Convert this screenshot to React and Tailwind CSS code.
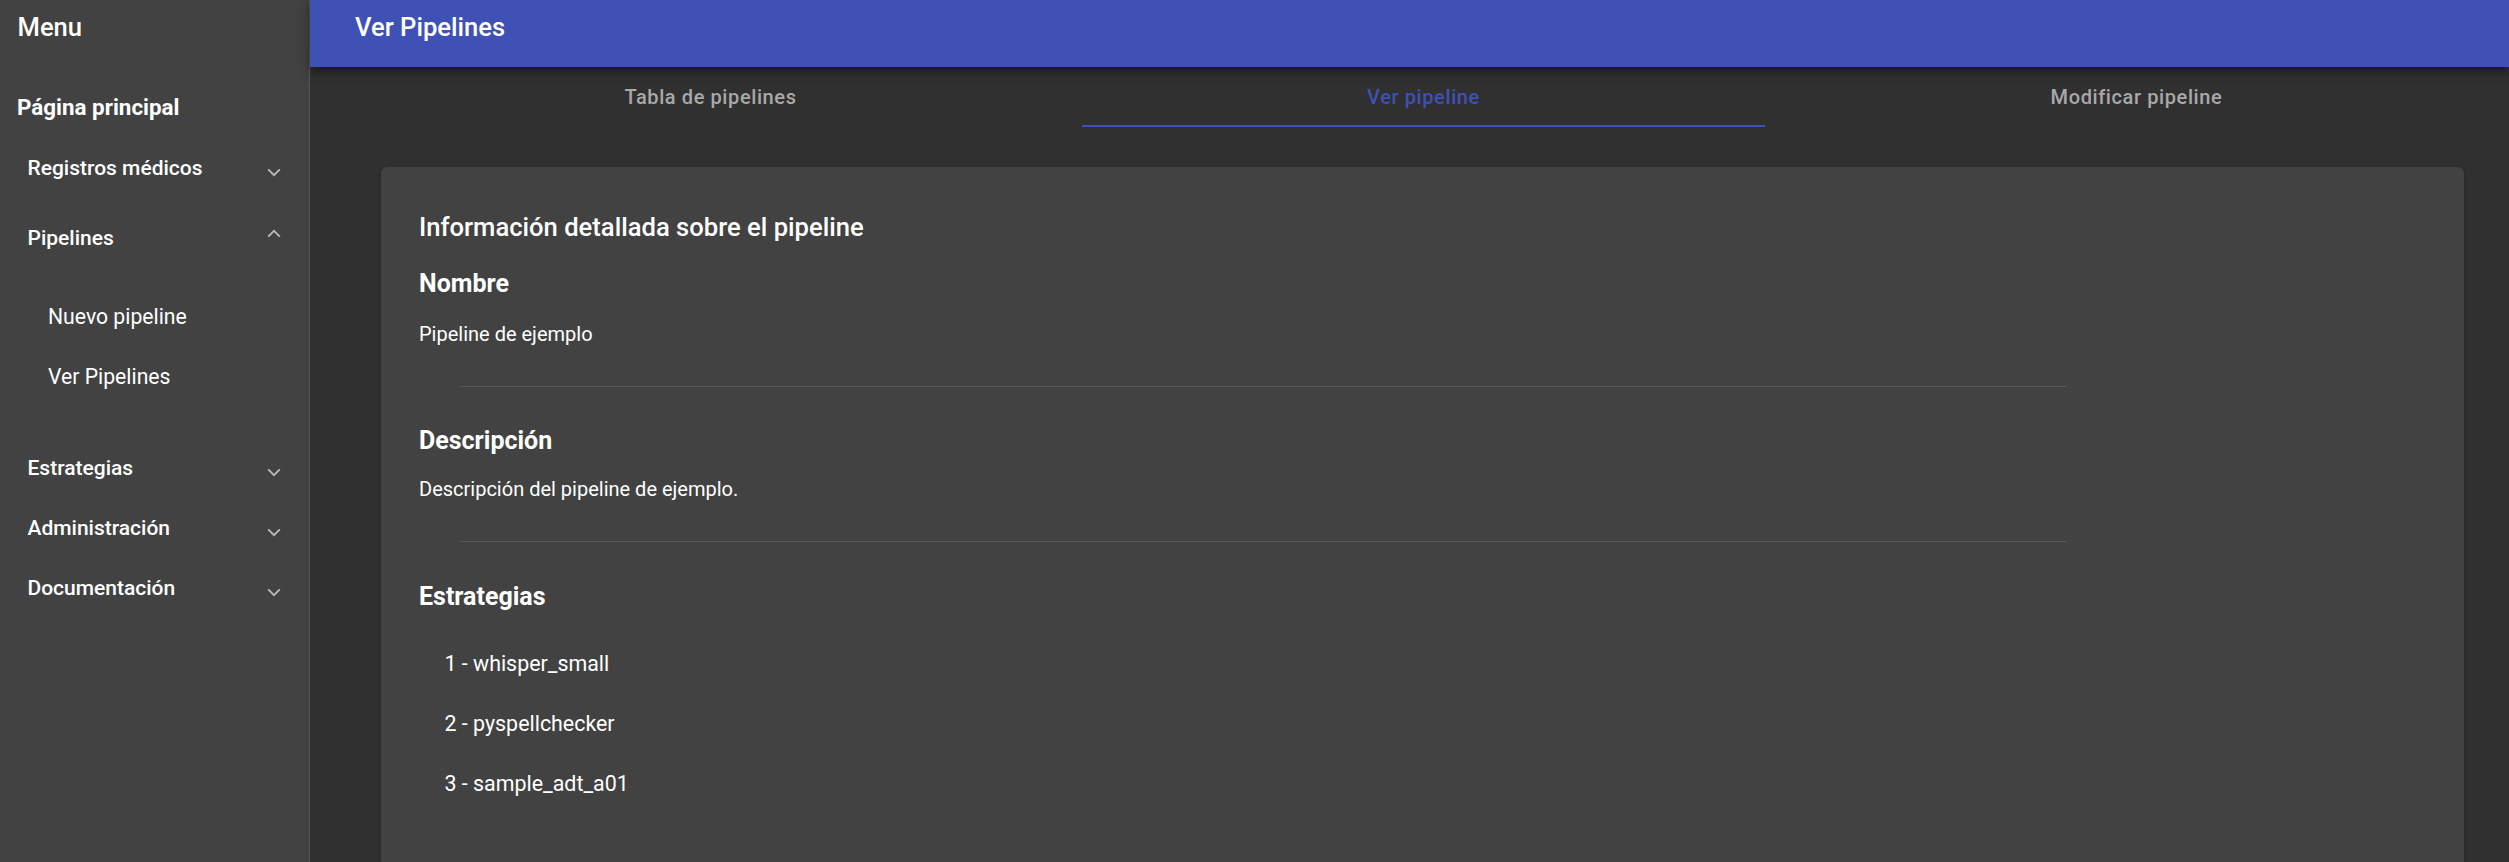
import React from 'react';

const Chevron = ({ up = false, className = '' }) => (
  <svg width="14" height="9" viewBox="0 0 14 9" fill="none" stroke="#b9b9b9" strokeWidth="1.9" className={className}>
    <polyline points={up ? '1.2,7.6 7,1.8 12.8,7.6' : '1.2,1.4 7,7.2 12.8,1.4'} />
  </svg>
);

const MenuGroup = ({ label, open = false, height = 'h-[60px]' }) => (
  <div className={`flex ${height} items-center justify-between pl-[27.5px] pr-[28px]`}>
    <span className="text-[21px] font-medium leading-[30px]">{label}</span>
    {open ? <Chevron up className="mb-[10px]" /> : <Chevron className="mt-[8px]" />}
  </div>
);

const tabs = ['Tabla de pipelines', 'Ver pipeline', 'Modificar pipeline'];
const strategies = ['whisper_small', 'pyspellchecker', 'sample_adt_a01'];

export default function App() {
  const active = 1;

  return (
    <div className="flex h-[862px] w-full overflow-hidden bg-[#303030] font-['Roboto',sans-serif] text-white">
      <aside className="w-[310px] shrink-0 border-r border-[#575757] bg-[#424242]">
        <div className="h-[54px] pl-[17.5px] pt-[9px]">
          <span className="text-[25.6px] font-medium leading-[36px]">Menu</span>
        </div>
        <div className="h-[23px]" />
        <div className="flex h-[60px] items-center pl-[17px]">
          <span className="text-[22.4px] font-bold leading-[30px]">Página principal</span>
        </div>
        <MenuGroup label="Registros médicos" height="h-[62px]" />
        <MenuGroup label="Pipelines" open height="h-[78px]" />
        <div className="pb-[31px] pt-[10px]">
          {['Nuevo pipeline', 'Ver Pipelines'].map((item) => (
            <div key={item} className="flex h-[60px] items-center pl-[48px]">
              <span className="text-[21.2px] leading-[30px]">{item}</span>
            </div>
          ))}
        </div>
        <MenuGroup label="Estrategias" />
        <MenuGroup label="Administración" />
        <MenuGroup label="Documentación" />
      </aside>

      <main className="flex min-w-0 flex-1 flex-col">
        <header className="relative z-10 h-[67px] shrink-0 bg-[#3f51b5] pl-[45px] pt-[9px] shadow-[0_3px_6px_-2px_rgba(0,0,0,0.35),0_6px_8px_0_rgba(0,0,0,0.22),0_2px_16px_0_rgba(0,0,0,0.18)]">
          <h1 className="text-[25.6px] font-medium leading-[36px]">Ver Pipelines</h1>
        </header>

        <nav className="ml-[44px] mr-[16px] grid h-[60px] shrink-0 grid-cols-3">
          {tabs.map((tab, i) => (
            <div key={tab} className="relative flex items-center justify-center">
              <span
                className={`text-[20px] font-medium leading-[30px] tracking-[0.6px] ${i === active ? 'text-[#3f51b5]' : 'text-[#a9a9a9]'}`}
              >
                {tab}
              </span>
              {i === active && <span className="absolute bottom-0 left-[15px] right-[15px] h-[2px] bg-[#3f51b5]" />}
            </div>
          ))}
        </nav>

        <section className="ml-[71px] mr-[45px] mt-[40px] shrink-0 rounded-[6px] bg-[#424242] pb-[120px] pl-[38px] pr-[38px] pt-[42px] shadow-[0_2px_4px_rgba(0,0,0,0.25)]">
          <h2 className="text-[25.6px] font-medium leading-[36px]">Información detallada sobre el pipeline</h2>

          <h3 className="mt-[22px] text-[25px] font-bold leading-[34px]">Nombre</h3>
          <p className="mt-[18px] text-[20px] leading-[30px]">Pipeline de ejemplo</p>
          <hr className="ml-[41px] mt-[37px] w-[80%] border-[#5a5a5a]" />

          <h3 className="mt-[37px] text-[25px] font-bold leading-[34px]">Descripción</h3>
          <p className="mt-[16px] text-[20px] leading-[30px]">Descripción del pipeline de ejemplo.</p>
          <hr className="ml-[41px] mt-[37px] w-[80%] border-[#5a5a5a]" />

          <h3 className="mt-[38px] text-[25px] font-bold leading-[34px]">Estrategias</h3>
          <ul className="mt-[35px] flex flex-col gap-[30px] pl-[25.5px]">
            {strategies.map((s, i) => (
              <li key={s} className="text-[21.4px] leading-[30px]">
                {i + 1} - {s}
              </li>
            ))}
          </ul>
        </section>
      </main>
    </div>
  );
}
